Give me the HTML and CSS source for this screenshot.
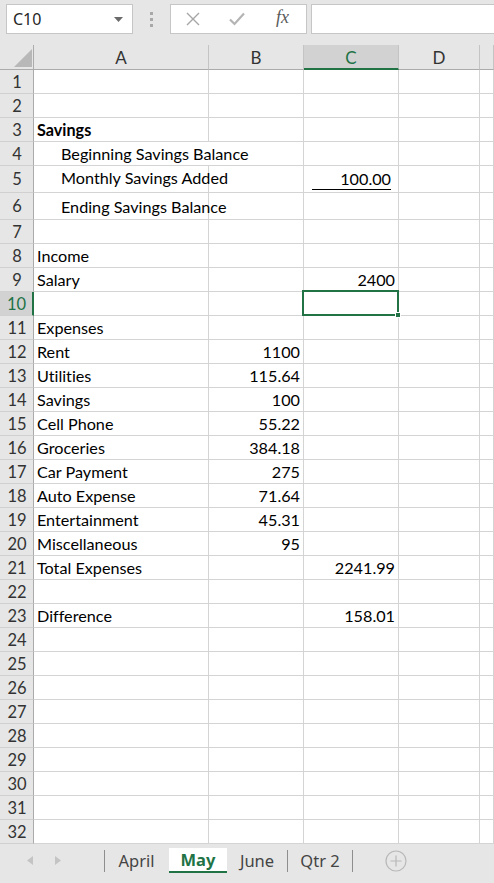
FILE: index.html
```html
<!DOCTYPE html>
<html>
<head>
<meta charset="utf-8">
<link rel="stylesheet" href="styles.css">
</head>
<body>
<div class="app">
  <div class="topbar">
    <div class="namebox"><span>C10</span><svg class="caret" width="9" height="5" viewBox="0 0 9 5"><path d="M0 0 H9 L4.5 5 Z" fill="#6a6a6a"/></svg></div>
    <div class="dots"><i></i><i></i><i></i></div>
    <div class="fxbox">
      <svg class="ico" width="14" height="14" viewBox="0 0 14 14"><path d="M1 1 L13 13 M13 1 L1 13" stroke="#a6a6a6" stroke-width="1.4" fill="none"/></svg>
      <svg class="ico" width="16" height="14" viewBox="0 0 16 14"><path d="M1 7.5 L5.5 12 L15 1.5" stroke="#b4b4b4" stroke-width="2.2" fill="none"/></svg>
      <span class="fx">fx</span>
    </div>
    <div class="formula"></div>
  </div>

  <div class="grid">
    <div class="corner"><svg width="18" height="18" viewBox="0 0 18 18"><path d="M18 0 V18 H0 Z" fill="#b8b8b8"/></svg></div>
    <div class="ch">A</div><div class="ch">B</div><div class="ch sel">C</div><div class="ch">D</div><div class="ch"></div>

    <div class="rh">1</div><div class="c"></div><div class="c"></div><div class="c"></div><div class="c"></div><div class="c"></div>
    <div class="rh">2</div><div class="c"></div><div class="c"></div><div class="c"></div><div class="c"></div><div class="c"></div>
    <div class="rh">3</div><div class="c b">Savings</div><div class="c"></div><div class="c"></div><div class="c"></div><div class="c"></div>
    <div class="rh">4</div><div class="c ind span2">Beginning Savings Balance</div><div class="c"></div><div class="c"></div><div class="c"></div>
    <div class="rh">5</div><div class="c ind r5">Monthly Savings Added</div><div class="c"></div><div class="c acc"><span class="accin">100.00</span></div><div class="c"></div><div class="c"></div>
    <div class="rh">6</div><div class="c ind r6">Ending Savings Balance</div><div class="c"></div><div class="c"></div><div class="c"></div><div class="c"></div>
    <div class="rh">7</div><div class="c"></div><div class="c"></div><div class="c"></div><div class="c"></div><div class="c"></div>
    <div class="rh">8</div><div class="c">Income</div><div class="c"></div><div class="c"></div><div class="c"></div><div class="c"></div>
    <div class="rh">9</div><div class="c">Salary</div><div class="c"></div><div class="c n">2400</div><div class="c"></div><div class="c"></div>
    <div class="rh sel">10</div><div class="c"></div><div class="c"></div><div class="c active"><span class="selbox"></span><span class="handle"></span></div><div class="c"></div><div class="c"></div>
    <div class="rh">11</div><div class="c">Expenses</div><div class="c"></div><div class="c"></div><div class="c"></div><div class="c"></div>
    <div class="rh">12</div><div class="c">Rent</div><div class="c n">1100</div><div class="c"></div><div class="c"></div><div class="c"></div>
    <div class="rh">13</div><div class="c">Utilities</div><div class="c n">115.64</div><div class="c"></div><div class="c"></div><div class="c"></div>
    <div class="rh">14</div><div class="c">Savings</div><div class="c n">100</div><div class="c"></div><div class="c"></div><div class="c"></div>
    <div class="rh">15</div><div class="c">Cell Phone</div><div class="c n">55.22</div><div class="c"></div><div class="c"></div><div class="c"></div>
    <div class="rh">16</div><div class="c">Groceries</div><div class="c n">384.18</div><div class="c"></div><div class="c"></div><div class="c"></div>
    <div class="rh">17</div><div class="c">Car Payment</div><div class="c n">275</div><div class="c"></div><div class="c"></div><div class="c"></div>
    <div class="rh">18</div><div class="c">Auto Expense</div><div class="c n">71.64</div><div class="c"></div><div class="c"></div><div class="c"></div>
    <div class="rh">19</div><div class="c">Entertainment</div><div class="c n">45.31</div><div class="c"></div><div class="c"></div><div class="c"></div>
    <div class="rh">20</div><div class="c">Miscellaneous</div><div class="c n">95</div><div class="c"></div><div class="c"></div><div class="c"></div>
    <div class="rh">21</div><div class="c">Total Expenses</div><div class="c"></div><div class="c n">2241.99</div><div class="c"></div><div class="c"></div>
    <div class="rh">22</div><div class="c"></div><div class="c"></div><div class="c"></div><div class="c"></div><div class="c"></div>
    <div class="rh">23</div><div class="c">Difference</div><div class="c"></div><div class="c n">158.01</div><div class="c"></div><div class="c"></div>
    <div class="rh">24</div><div class="c"></div><div class="c"></div><div class="c"></div><div class="c"></div><div class="c"></div>
    <div class="rh">25</div><div class="c"></div><div class="c"></div><div class="c"></div><div class="c"></div><div class="c"></div>
    <div class="rh">26</div><div class="c"></div><div class="c"></div><div class="c"></div><div class="c"></div><div class="c"></div>
    <div class="rh">27</div><div class="c"></div><div class="c"></div><div class="c"></div><div class="c"></div><div class="c"></div>
    <div class="rh">28</div><div class="c"></div><div class="c"></div><div class="c"></div><div class="c"></div><div class="c"></div>
    <div class="rh">29</div><div class="c"></div><div class="c"></div><div class="c"></div><div class="c"></div><div class="c"></div>
    <div class="rh">30</div><div class="c"></div><div class="c"></div><div class="c"></div><div class="c"></div><div class="c"></div>
    <div class="rh">31</div><div class="c"></div><div class="c"></div><div class="c"></div><div class="c"></div><div class="c"></div>
    <div class="rh">32</div><div class="c"></div><div class="c"></div><div class="c"></div><div class="c"></div><div class="c"></div>
  </div>

  <div class="tabbar">
    <div class="nav">
      <svg width="6" height="9" viewBox="0 0 6 9"><path d="M6 0 V9 L0 4.5 Z" fill="#c4c4c4"/></svg>
      <svg width="6" height="9" viewBox="0 0 6 9"><path d="M0 0 V9 L6 4.5 Z" fill="#c4c4c4"/></svg>
    </div>
    <div class="sep"></div>
    <div class="tab t-april">April</div>
    <div class="tab t-may active">May</div>
    <div class="tab t-june">June</div>
    <div class="sep"></div>
    <div class="tab t-qtr">Qtr 2</div>
    <div class="sep"></div>
    <div class="add"><svg width="22" height="22" viewBox="0 0 22 22"><circle cx="11" cy="11" r="10" stroke="#b8b8b8" stroke-width="1.2" fill="none"/><path d="M11 5.5 V16.5 M5.5 11 H16.5" stroke="#b8b8b8" stroke-width="1.2"/></svg></div>
  </div>
</div>
</body>
</html>
```

FILE: styles.css
```css
* { box-sizing: border-box; }
body { margin: 0; background: #fff; font-family: Lato, "Liberation Sans", sans-serif; font-variant-ligatures: none; }

.app {
  width: 494px;
  height: 883px;
  overflow: hidden;
  display: flex;
  flex-direction: column;
  background: #e6e6e6;
}

/* top formula bar */
.topbar {
  height: 45px;
  flex: none;
  display: flex;
  align-items: flex-start;
  padding: 4px 0 0 6px;
}
.namebox {
  width: 127px;
  height: 30px;
  background: #fff;
  border: 1px solid #c6c6c6;
  display: flex;
  align-items: center;
  justify-content: space-between;
  padding: 0 9px 0 6px;
  font-family: "Noto Sans", sans-serif;
  font-size: 16px;
  color: #262626;
}
.dots {
  width: 37px;
  height: 30px;
  display: flex;
  flex-direction: column;
  align-items: center;
  justify-content: center;
  gap: 3px;
}
.dots i { display: block; width: 3px; height: 3px; background: #a8a8a8; }
.fxbox {
  width: 137px;
  height: 30px;
  background: #fff;
  border: 1px solid #c6c6c6;
  display: flex;
  align-items: center;
  padding-left: 15px;
  gap: 29px;
}
.fx {
  font-family: "Liberation Serif", serif;
  font-style: italic;
  font-size: 18px;
  color: #5a5a5a;
  margin-left: 2px;
  margin-top: -3px;
}
.formula {
  flex: 1;
  height: 30px;
  margin-left: 4px;
  background: #fff;
  border: 1px solid #c6c6c6;
  border-right: none;
}

/* sheet grid */
.grid {
  flex: none;
  height: 799px;
  display: grid;
  grid-template-columns: 34px 175px 95px 95px 81px 14px;
  grid-template-rows: 25px repeat(4, 24px) 27px 27px repeat(26, 24px);
  background: #fff;
}
.corner {
  background: #e6e6e6;
  border-right: 1px solid #ababab;
  border-bottom: 1px solid #ababab;
  display: flex;
  align-items: flex-end;
  justify-content: flex-end;
  padding: 0 1px 2px 0;
}
.ch {
  background: #e6e6e6;
  border-right: 1px solid #c4c4c4;
  border-bottom: 1px solid #ababab;
  display: flex;
  align-items: center;
  justify-content: center;
  font-size: 17px;
  color: #333;
  padding-top: 1px;
}
.ch.sel {
  background: #d2d2d2;
  color: #217346;
  border-bottom: 2px solid #217346;
}
.rh {
  background: #e6e6e6;
  border-right: 1px solid #ababab;
  border-bottom: 1px solid #d0d0d0;
  display: flex;
  align-items: center;
  justify-content: center;
  font-size: 16.5px;
  color: #333;
  padding-left: 1px;
}
.rh.sel {
  background: #d2d2d2;
  color: #217346;
  border-right: 2px solid #217346;
}
.c {
  position: relative;
  border-right: 1px solid #d4d4d4;
  border-bottom: 1px solid #d4d4d4;
  display: flex;
  align-items: flex-end;
  padding: 0 3px 2px;
  font-size: 16.2px;
  line-height: 19px;
  color: #000;
  white-space: nowrap;
}
.c.b { font-weight: 700; }
.c.ind { padding-left: 27px; }
.c.span2 { grid-column: span 2; }
.c.r5 { padding-bottom: 5px; }
.c.r6 { padding-bottom: 3px; }
.c.n { justify-content: flex-end; padding-right: 3px; }
.c.acc { padding: 0 7px 2px 8px; }
.accin {
  display: block;
  width: 100%;
  text-align: right;
  border-bottom: 1px solid #000;
  padding-bottom: 1px;
  line-height: 19px;
}
.c.active { overflow: visible; }
.selbox {
  position: absolute;
  left: -2px;
  top: -2px;
  right: -1px;
  bottom: -1px;
  border: 2px solid #217346;
}
.handle {
  position: absolute;
  right: -3px;
  bottom: -3px;
  width: 6px;
  height: 6px;
  background: #217346;
  border: 1px solid #fff;
  z-index: 2;
}

/* sheet tabs */
.tabbar {
  flex: 1;
  display: flex;
  align-items: flex-start;
  padding-top: 4px;
  background: #e6e6e6;
  font-family: "Noto Sans", sans-serif;
  font-size: 16.5px;
  color: #444;
}
.nav {
  width: 104px;
  height: 25px;
  display: flex;
  align-items: center;
  padding-left: 27px;
  gap: 22px;
}
.sep {
  width: 1px;
  height: 22px;
  margin-top: 2px;
  background: #8e8e8e;
}
.tab {
  height: 25px;
  display: flex;
  align-items: center;
  justify-content: center;
  padding-bottom: 1px;
}
.t-april { width: 63px; margin-right: 1px; }
.t-may { width: 58px; }
.t-june { width: 60px; }
.t-qtr { width: 64px; }
.tab.active {
  background: #fff;
  color: #217346;
  font-weight: 700;
  border-bottom: 2px solid #217346;
}
.add {
  height: 25px;
  display: flex;
  align-items: center;
  padding-left: 32px;
}
```
